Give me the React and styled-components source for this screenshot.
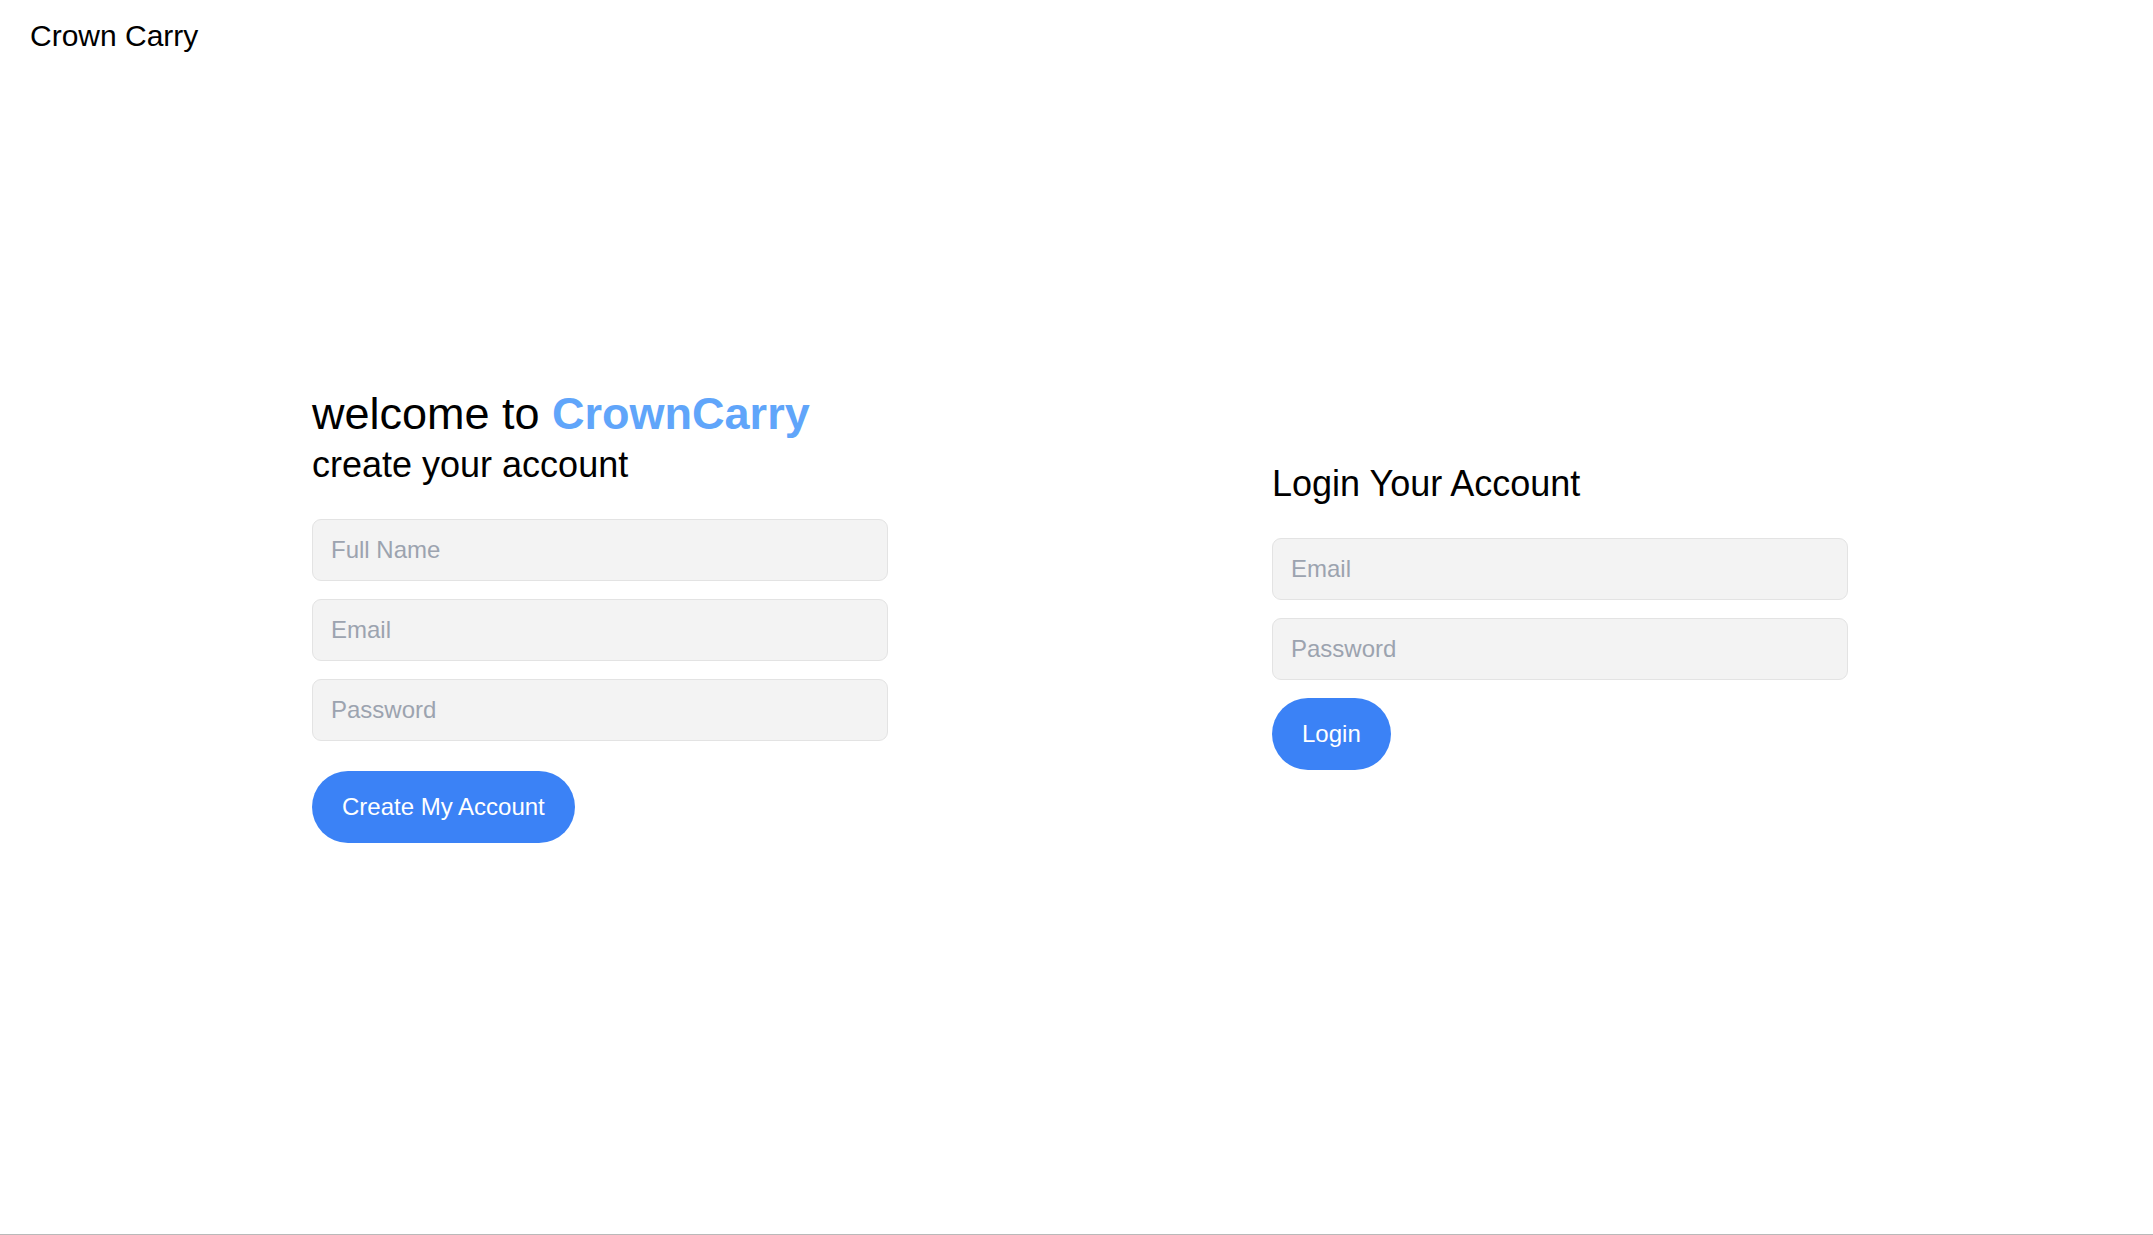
import React, { useState } from 'react';
import styled, { createGlobalStyle } from 'styled-components';

const GlobalStyle = createGlobalStyle`
  * { box-sizing: border-box; }
  html, body {
    margin: 0;
    padding: 0;
    background: #fff;
    font-family: "Liberation Sans", Arial, sans-serif;
    color: #000;
  }
`;

const Page = styled.div`
  height: 100vh;
  display: flex;
  flex-direction: column;
  border-bottom: 1px solid #b9b9b9;
`;

const Header = styled.header`
  padding: 15px 30px;
  font-size: 30px;
  line-height: 42px;
`;

const Main = styled.main`
  flex: 1;
  display: flex;
  align-items: center;
  gap: 384px;
  padding: 0 0 77px 312px;
`;

const Column = styled.section`
  width: 576px;
  display: flex;
  flex-direction: column;
`;

const Title = styled.h1`
  margin: 0;
  font-size: 45px;
  line-height: 54px;
  font-weight: 400;
`;

const Brand = styled.span`
  color: #60a5fa;
  font-weight: 700;
`;

const Subtitle = styled.h2`
  margin: 0 0 ${(p) => p.$gap || 30}px;
  font-size: 36px;
  line-height: 48px;
  font-weight: 400;
`;

const Form = styled.form`
  display: flex;
  flex-direction: column;
  align-items: flex-start;
  gap: 18px;
`;

const Input = styled.input`
  width: 100%;
  padding: 12px 18px;
  font-family: inherit;
  font-size: 24px;
  line-height: 36px;
  background: #f3f3f3;
  border: 1px solid #e3e3e3;
  border-radius: 9px;
  color: #111;
  outline: none;

  &::placeholder {
    color: #9ca3af;
  }
`;

const Button = styled.button`
  margin-top: ${(p) => p.$offset || 0}px;
  padding: 18px 30px;
  font-family: inherit;
  font-size: 24px;
  line-height: 36px;
  color: #fff;
  background: #3b82f6;
  border: none;
  border-radius: 999px;
  cursor: pointer;
`;

const App = () => {
  const [signup, setSignup] = useState({ name: '', email: '', password: '' });
  const [login, setLogin] = useState({ email: '', password: '' });

  const handleSignup = (e) => setSignup({ ...signup, [e.target.name]: e.target.value });
  const handleLogin = (e) => setLogin({ ...login, [e.target.name]: e.target.value });

  return (
    <Page>
      <GlobalStyle />
      <Header>Crown Carry</Header>
      <Main>
        <Column>
          <Title>
            welcome to <Brand>CrownCarry</Brand>
          </Title>
          <Subtitle>create your account</Subtitle>
          <Form onSubmit={(e) => e.preventDefault()}>
            <Input name="name" placeholder="Full Name" value={signup.name} onChange={handleSignup} />
            <Input name="email" type="email" placeholder="Email" value={signup.email} onChange={handleSignup} />
            <Input name="password" type="password" placeholder="Password" value={signup.password} onChange={handleSignup} />
            <Button type="submit" $offset={12}>Create My Account</Button>
          </Form>
        </Column>
        <Column>
          <Subtitle>Login Your Account</Subtitle>
          <Form onSubmit={(e) => e.preventDefault()}>
            <Input name="email" type="email" placeholder="Email" value={login.email} onChange={handleLogin} />
            <Input name="password" type="password" placeholder="Password" value={login.password} onChange={handleLogin} />
            <Button type="submit">Login</Button>
          </Form>
        </Column>
      </Main>
    </Page>
  );
};

export default App;
